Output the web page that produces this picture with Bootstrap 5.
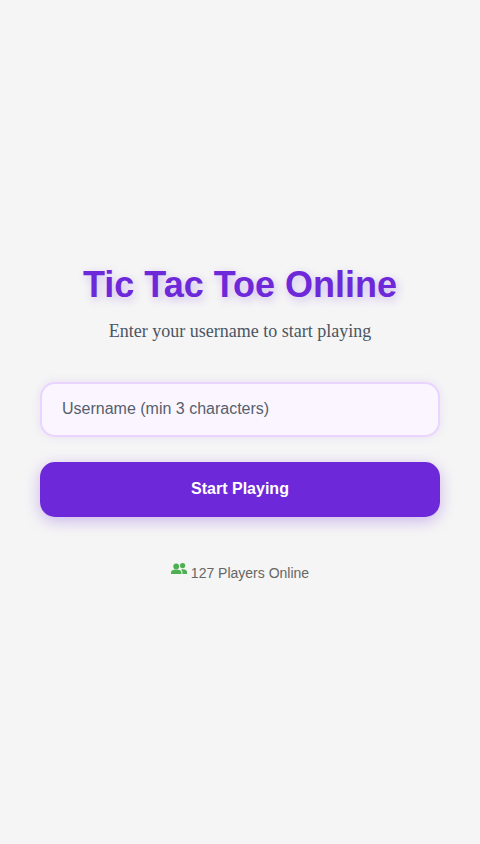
<!DOCTYPE html>
<html lang="en">
<head>
<meta charset="utf-8">
<meta name="viewport" content="width=device-width, initial-scale=1">
<link href="https://cdn.jsdelivr.net/npm/bootstrap@5.3.0/dist/css/bootstrap.min.css" rel="stylesheet">
<style>
html, body { height: 100%; }
body { background: #f5f5f5; font-family: "Liberation Sans", Arial, sans-serif; }
.login-wrap { min-height: 844px; padding: 0 40px; }
.game-title { font-family: "Liberation Sans", Arial, sans-serif; font-size: 36px; font-weight: 700; line-height: 41px; color: #6d28d9; text-shadow: 2px 3px 10px rgba(109,40,217,.28); margin: 0 0 15px; }
.game-sub { font-family: "Liberation Serif", "Times New Roman", serif; font-size: 18px; line-height: 22px; color: #4b5563; margin: 0 0 40px; }
.name-input { height: 55px; border: 2px solid #e9d5ff; border-radius: 15px; background: #faf5ff; color: #4b5563; font-size: 16px; padding: 0 20px; box-shadow: 0 0 10px rgba(109,40,217,.1); }
.name-input::placeholder { color: #565f6c; opacity: 1; }
.start-btn { height: 55px; border: 0; border-radius: 15px; background: #6d28d9; color: #fff; font-size: 16px; font-weight: 700; box-shadow: 0 4px 15px rgba(109,40,217,.3); margin-top: 25px; }
.online-line { margin-top: 44px; font-size: 14px; color: #666; line-height: 16px; }
.people-ico { width: 16px; height: 16px; fill: #4caf50; margin-right: 4px; vertical-align: 1px; }
</style>
</head>
<body>
<main class="login-wrap d-flex flex-column justify-content-center text-center">
  <h1 class="game-title">Tic Tac Toe Online</h1>
  <p class="game-sub">Enter your username to start playing</p>
  <form class="d-flex flex-column">
    <input class="form-control name-input" type="text" placeholder="Username (min 3 characters)">
    <button class="btn start-btn" type="button">Start Playing</button>
  </form>
  <div class="online-line"><svg class="people-ico" viewBox="0 0 16 16"><circle cx="5.2" cy="5.4" r="2.9"/><circle cx="11.6" cy="4.6" r="2.6"/><path d="M0 13v-1.6C0 9.400 2.200 8.600 5.200 8.600s5.200.8 5.200 2.800V13z"/><path d="M11.400 13v-1.700c0-1.200-.6-2.100-1.400-2.800.6-.2 1.300-.3 2-.3 2.300 0 4 .8 4 2.600V13z"/></svg>127 Players Online</div>
</main>
<script src="https://cdn.jsdelivr.net/npm/bootstrap@5.3.0/dist/js/bootstrap.bundle.min.js"></script>
</body>
</html>
